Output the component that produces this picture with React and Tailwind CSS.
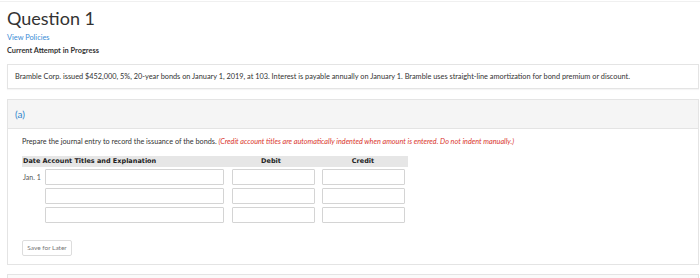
import React from "react";

const rows = ["Jan. 1", "", ""];

const App = () => {
  return (
    <div
      className="w-[700px] h-[278px] overflow-hidden bg-white text-[#333]"
      style={{ fontFamily: "Lato, 'Open Sans', sans-serif" }}
    >
      <div className="h-[2px] border-b border-[#f0f0f0]" />
      <div className="pl-[7px]">
        <h1 className="mt-[6px] text-[18px] leading-[20px] text-[#333]">Question 1</h1>
        <div className="mt-[5px] text-[7.4px] leading-[9px] text-[#3a8cd6]">View Policies</div>
        <div className="mt-[4px] text-[7.4px] leading-[9px] font-bold text-[#333]">
          Current Attempt in Progress
        </div>

        <div className="mt-[9px] w-[692px] h-[25px] border border-[#e4e4e4] flex items-center px-[7px] text-[7.35px] text-[#333] shadow-[0_1px_1px_rgba(0,0,0,0.04)]">
          Bramble Corp. issued $452,000, 5%, 20-year bonds on January 1, 2019, at 103. Interest is payable annually on January 1. Bramble uses straight-line amortization for bond premium or discount.
        </div>

        <div className="mt-[10px] w-[692px] h-[166px] border border-[#e4e4e4]">
          <div className="h-[29px] bg-[#f5f5f5] border-b border-[#e4e4e4] flex items-center px-[7px] text-[10px] text-[#2f86cc]">
            (a)
          </div>
          <div className="pl-[14px] pt-[8px]">
            <div className="text-[7.25px] leading-[9px] text-[#333]">
              Prepare the journal entry to record the issuance of the bonds.{" "}
              <span className="italic text-[#d9342b]">
                (Credit account titles are automatically indented when amount is entered. Do not indent manually.)
              </span>
            </div>

            <div
              className="mt-[10px] w-[386px] h-[11px] bg-[#e6e6e6] flex items-center text-[6.5px] font-bold text-[#222]"
              style={{ fontFamily: "'DejaVu Sans', Verdana, sans-serif" }}
            >
              <div className="w-[202px] pl-[1px]">Date Account Titles and Explanation</div>
              <div className="w-[94px] text-center">Debit</div>
              <div className="w-[90px] text-center">Credit</div>
            </div>

            <div className="mt-[2px] flex flex-col gap-[3px]">
              {rows.map((label, i) => (
                <div key={i} className="flex items-center h-[16px]">
                  <div className="w-[23px] text-[7px] text-[#555] pl-[1px]">{label}</div>
                  <div className="w-[179px] h-[16px] border border-[#d4d4d4] rounded-[1px]" />
                  <div className="ml-[8px] w-[83px] h-[16px] border border-[#d4d4d4] rounded-[1px]" />
                  <div className="ml-[7px] w-[83px] h-[16px] border border-[#d4d4d4] rounded-[1px]" />
                </div>
              ))}
            </div>

            <button className="mt-[17px] w-[50px] h-[16px] border border-[#ddd] rounded-[2px] bg-white text-[6.5px] text-[#777] flex items-center justify-center">
              Save for Later
            </button>
          </div>
        </div>

        <div className="mt-[9px] w-[692px] h-[20px] border border-[#e4e4e4] bg-[#fafafa]" />
      </div>
    </div>
  );
};

export default App;
